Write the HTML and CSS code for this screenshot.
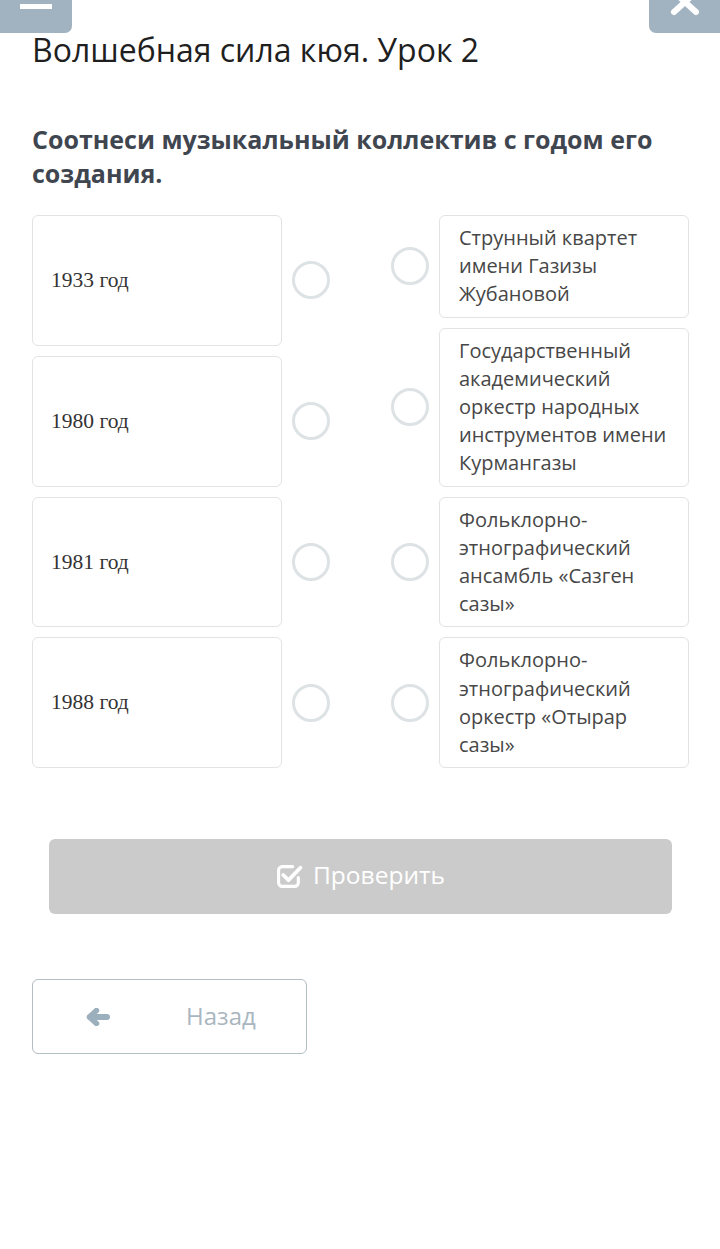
FILE: index.html
```html
<!DOCTYPE html>
<html lang="ru">
<head>
<meta charset="utf-8">
<title>Волшебная сила кюя. Урок 2</title>
<link rel="stylesheet" href="styles.css">
</head>
<body>
<button class="corner corner-left" aria-label="Меню">
  <span class="minus"></span>
</button>
<button class="corner corner-right" aria-label="Закрыть">
  <svg class="x-icon" width="30" height="24" viewBox="0 0 30 24"><path d="M4 -8 L26 12 M26 -8 L4 12" stroke="#fff" stroke-width="6" stroke-linecap="round" fill="none"/></svg>
</button>
<main class="page">
  <h1 class="title">Волшебная сила кюя. Урок 2</h1>
  <h2 class="question">Соотнеси музыкальный коллектив с годом его создания.</h2>

  <div class="match">
    <div class="col col-left">
      <div class="row row-left"><div class="card card-year">1933 год</div><span class="dot"></span></div>
      <div class="row row-left"><div class="card card-year">1980 год</div><span class="dot"></span></div>
      <div class="row row-left"><div class="card card-year">1981 год</div><span class="dot"></span></div>
      <div class="row row-left"><div class="card card-year">1988 год</div><span class="dot"></span></div>
    </div>
    <div class="col col-right">
      <div class="row row-right"><span class="dot"></span><div class="card card-name">Струнный квартет имени Газизы Жубановой</div></div>
      <div class="row row-right"><span class="dot"></span><div class="card card-name">Государственный академический оркестр народных инструментов имени Курмангазы</div></div>
      <div class="row row-right"><span class="dot"></span><div class="card card-name">Фольклорно-этнографический ансамбль «Сазген сазы»</div></div>
      <div class="row row-right"><span class="dot"></span><div class="card card-name">Фольклорно-этнографический оркестр «Отырар сазы»</div></div>
    </div>
  </div>

  <button class="check">
    <svg class="check-icon" width="27" height="26" viewBox="0 0 26 25">
      <path d="M16 3.5 H6 a3.5 3.5 0 0 0 -3.5 3.5 V19 a3.5 3.5 0 0 0 3.5 3.5 H18 a3.5 3.5 0 0 0 3.5 -3.5 V14" stroke="#fff" stroke-width="3" fill="none" stroke-linecap="round"/>
      <path d="M7 11.5 L12 16.5 L23.5 4.5" stroke="#fff" stroke-width="3.6" fill="none" stroke-linecap="round" stroke-linejoin="round"/>
    </svg>
    <span>Проверить</span>
  </button>

  <button class="back">
    <svg class="arrow" width="26" height="18" viewBox="0 0 26 18">
      <path d="M5 9 H22" stroke="#9cafbd" stroke-width="6" stroke-linecap="round"/>
      <path d="M11.5 2.5 L4.5 9 L11.5 15.5" stroke="#9cafbd" stroke-width="5.5" fill="none" stroke-linecap="round" stroke-linejoin="round"/>
    </svg>
    <span>Назад</span>
  </button>
</main>
</body>
</html>
```

FILE: styles.css
```css
* { box-sizing: border-box; }
html, body { margin: 0; padding: 0; background: #fff; }
body { font-family: "Open Sans", "DejaVu Sans", sans-serif; }

.corner {
  position: absolute;
  top: 0;
  width: 72px;
  height: 33px;
  background: #a1b3c0;
  border: none;
  padding: 0;
  overflow: hidden;
}
.corner-left { left: 0; border-radius: 0 0 7px 0; }
.corner-right { right: 0; width: 71px; border-radius: 0 0 0 7px; }
.minus {
  position: absolute;
  left: 20px;
  top: 4px;
  width: 32px;
  height: 5px;
  background: #fff;
}
.x-icon { position: absolute; left: 21px; top: 0; }

.page { padding: 30px 31px 100px 32px; }

.title {
  margin: 0;
  font-weight: 400;
  font-size: 32px;
  line-height: 40px;
  color: #1f1f1f;
}
.question {
  margin: 52px 0 0;
  font-weight: 700;
  font-size: 25px;
  line-height: 34px;
  color: #3f4650;
}

.match {
  margin-top: 25px;
  display: flex;
  justify-content: space-between;
  align-items: stretch;
}
.col { display: flex; flex-direction: column; gap: 10px; }
.row { display: flex; align-items: center; gap: 10px; }
.col-left .row { flex: 1; }
.row-left .card { align-self: stretch; }

.card {
  width: 250px;
  border: 1px solid #e3e3e3;
  border-radius: 6px;
  background: #fff;
}
.card-year {
  display: flex;
  align-items: center;
  padding: 0 19px 0 18px;
  font-family: "Liberation Serif", "DejaVu Serif", serif;
  font-size: 21.5px;
  color: #333;
}
.card-name {
  padding: 8px 19px;
  font-size: 20px;
  line-height: 28.2px;
  color: #474747;
}
.dot {
  width: 38px;
  height: 38px;
  border: 3px solid #dde2e5;
  border-radius: 50%;
  flex: none;
}

.check {
  display: flex;
  align-items: center;
  justify-content: center;
  gap: 10px;
  width: 623px;
  height: 75px;
  margin: 71px 0 0 17px;
  background: #cbcbcb;
  border: none;
  border-radius: 6px;
  color: #fff;
  font-family: "Open Sans", sans-serif;
  font-size: 24.5px;
  padding: 0 0 4px;
}
.check-icon { margin-top: 3px; }

.back {
  display: flex;
  align-items: center;
  width: 275px;
  height: 75px;
  margin-top: 65px;
  padding: 0 0 2px 52px;
  background: #fff;
  border: 1px solid #b3bdc4;
  border-radius: 6px;
  color: #a9b6bf;
  font-family: "Open Sans", sans-serif;
  font-size: 24px;
}
.arrow { margin-right: 75px; margin-top: 2px; }
```
